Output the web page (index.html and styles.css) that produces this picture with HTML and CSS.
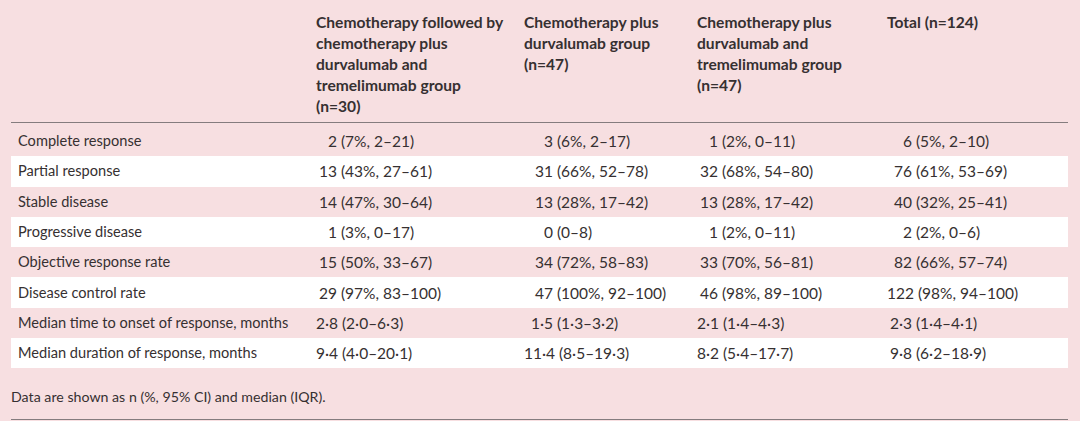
FILE: index.html
```html
<!DOCTYPE html>
<html lang="en">
<head>
<meta charset="utf-8">
<title>Response table</title>
<link rel="stylesheet" href="styles.css">
</head>
<body>
<div class="wrap">
  <table class="tbl">
    <colgroup>
      <col class="c1"><col class="c2"><col class="c3"><col class="c4"><col class="c5">
    </colgroup>
    <thead>
      <tr>
        <th class="blank"></th>
        <th>Chemotherapy followed by<br>chemotherapy plus<br>durvalumab and<br>tremelimumab group<br>(n=30)</th>
        <th>Chemotherapy plus<br>durvalumab group<br>(n=47)</th>
        <th>Chemotherapy plus<br>durvalumab and<br>tremelimumab group<br>(n=47)</th>
        <th>Total (n=124)</th>
      </tr>
    </thead>
    <tbody>
      <tr class="pink first">
        <td class="lab">Complete response</td>
        <td class="k2"><span class="n">2</span> (7%, 2–21)</td>
        <td class="k3"><span class="n">3</span> (6%, 2–17)</td>
        <td class="k4"><span class="n">1</span> (2%, 0–11)</td>
        <td class="k5"><span class="n">6</span> (5%, 2–10)</td>
      </tr>
      <tr class="white">
        <td class="lab">Partial response</td>
        <td class="k2"><span class="n">13</span> (43%, 27–61)</td>
        <td class="k3"><span class="n">31</span> (66%, 52–78)</td>
        <td class="k4"><span class="n">32</span> (68%, 54–80)</td>
        <td class="k5"><span class="n">76</span> (61%, 53–69)</td>
      </tr>
      <tr class="pink">
        <td class="lab">Stable disease</td>
        <td class="k2"><span class="n">14</span> (47%, 30–64)</td>
        <td class="k3"><span class="n">13</span> (28%, 17–42)</td>
        <td class="k4"><span class="n">13</span> (28%, 17–42)</td>
        <td class="k5"><span class="n">40</span> (32%, 25–41)</td>
      </tr>
      <tr class="white">
        <td class="lab">Progressive disease</td>
        <td class="k2"><span class="n">1</span> (3%, 0–17)</td>
        <td class="k3"><span class="n">0</span> (0–8)</td>
        <td class="k4"><span class="n">1</span> (2%, 0–11)</td>
        <td class="k5"><span class="n">2</span> (2%, 0–6)</td>
      </tr>
      <tr class="pink">
        <td class="lab">Objective response rate</td>
        <td class="k2"><span class="n">15</span> (50%, 33–67)</td>
        <td class="k3"><span class="n">34</span> (72%, 58–83)</td>
        <td class="k4"><span class="n">33</span> (70%, 56–81)</td>
        <td class="k5"><span class="n">82</span> (66%, 57–74)</td>
      </tr>
      <tr class="white">
        <td class="lab">Disease control rate</td>
        <td class="k2"><span class="n">29</span> (97%, 83–100)</td>
        <td class="k3"><span class="n">47</span> (100%, 92–100)</td>
        <td class="k4"><span class="n">46</span> (98%, 89–100)</td>
        <td class="k5"><span class="n">122</span> (98%, 94–100)</td>
      </tr>
      <tr class="pink">
        <td class="lab">Median time to onset of response, months</td>
        <td class="k2"><span class="n">2·8</span> (2·0–6·3)</td>
        <td class="k3"><span class="n">1·5</span> (1·3–3·2)</td>
        <td class="k4"><span class="n">2·1</span> (1·4–4·3)</td>
        <td class="k5"><span class="n">2·3</span> (1·4–4·1)</td>
      </tr>
      <tr class="white">
        <td class="lab">Median duration of response, months</td>
        <td class="k2"><span class="n">9·4</span> (4·0–20·1)</td>
        <td class="k3"><span class="n">11·4</span> (8·5–19·3)</td>
        <td class="k4"><span class="n">8·2</span> (5·4–17·7)</td>
        <td class="k5"><span class="n">9·8</span> (6·2–18·9)</td>
      </tr>
    </tbody>
  </table>
  <p class="note">Data are shown as n (%, 95% CI) and median (IQR).</p>
</div>
</body>
</html>
```

FILE: styles.css
```css
html, body {
  margin: 0;
  padding: 0;
  background: #f7dfe1;
}

body {
  font-family: Lato, "Open Sans", "Liberation Sans", sans-serif;
  color: #363031;
}

.wrap {
  width: 1057px;
  margin-left: 11px;
  padding-bottom: 2px;
  border-bottom: 1px solid #857c7e;
}

.tbl {
  width: 1057px;
  border-collapse: collapse;
  table-layout: fixed;
}

.c1 { width: 305px; }
.c2 { width: 208px; }
.c3 { width: 173px; }
.c4 { width: 190px; }
.c5 { width: 181px; }

.tbl th {
  text-align: left;
  vertical-align: top;
  font-weight: 700;
  font-size: 15.6px;
  line-height: 21px;
  padding: 12px 0 5px 0;
  white-space: nowrap;
  border-bottom: 1px solid #857c7e;
}

.tbl td {
  height: 30.3px;
  padding: 0;
  font-size: 15.5px;
  line-height: 30px;
  white-space: nowrap;
  vertical-align: middle;
}

.tbl tbody tr.first td {
  padding-top: 3px;
}

.tbl td.lab {
  padding-left: 7px;
  font-size: 14.6px;
}

.tbl tr.white td { background: #ffffff; }
.tbl tr.pink td { background: transparent; }

.n {
  display: inline-block;
  text-align: right;
  font-variant-numeric: tabular-nums;
}

.k2 .n { min-width: 21px; }
.k3 .n { min-width: 29px; }
.k4 .n { min-width: 21px; }
.k5 .n { min-width: 25px; }

.note {
  margin: 0;
  padding: 20px 0 11px 0;
  font-size: 14.2px;
  line-height: 18px;
}
```
